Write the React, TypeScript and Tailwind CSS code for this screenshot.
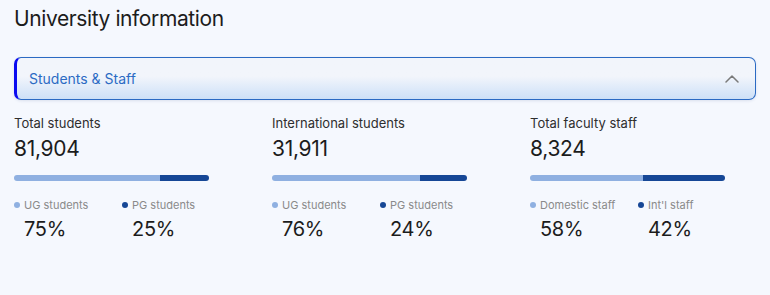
import React from 'react';

type Stat = {
  label: string;
  value: string;
  parts: { name: string; pct: number }[];
};

const stats: Stat[] = [
  {
    label: 'Total students',
    value: '81,904',
    parts: [
      { name: 'UG students', pct: 75 },
      { name: 'PG students', pct: 25 },
    ],
  },
  {
    label: 'International students',
    value: '31,911',
    parts: [
      { name: 'UG students', pct: 76 },
      { name: 'PG students', pct: 24 },
    ],
  },
  {
    label: 'Total faculty staff',
    value: '8,324',
    parts: [
      { name: 'Domestic staff', pct: 58 },
      { name: "Int'l staff", pct: 42 },
    ],
  },
];

const StatBlock = ({ stat }: { stat: Stat }) => {
  const [a, b] = stat.parts;
  return (
    <div className="w-[258px] shrink-0">
      <div className="text-[13px] leading-[16px] text-[#2e2e2e]">{stat.label}</div>
      <div className="mt-[5px] text-[21px] leading-[26px] text-[#1c1c1c] tracking-[-0.3px]">{stat.value}</div>
      <div className="mt-[13px] flex h-[6px] w-[195px] overflow-hidden rounded-full">
        <div className="h-full bg-[#8fb0e1]" style={{ width: `${a.pct}%` }} />
        <div className="h-full flex-1 bg-[#164796]" />
      </div>
      <div className="mt-[17px] flex">
        {[a, b].map((p, i) => (
          <div key={p.name} className="w-[108px]">
            <div className="flex items-center gap-[4px]">
              <span className={`h-[6px] w-[6px] rounded-full ${i === 0 ? 'bg-[#8fb0e1]' : 'bg-[#164796]'}`} />
              <span className="text-[11px] leading-[14px] text-[#8a8a8a]">{p.name}</span>
            </div>
            <div className="mt-[5px] pl-[10px] text-[20px] leading-[24px] text-[#1c1c1c] tracking-[-0.3px]">{p.pct}%</div>
          </div>
        ))}
      </div>
    </div>
  );
};

export default function App() {
  return (
    <div
      className="h-[295px] w-[770px] overflow-hidden bg-[#f5f8fe] px-[14px] pt-[6px]"
      style={{ fontFamily: 'Inter, "Noto Sans", sans-serif' }}
    >
      <h1 className="text-[21px] leading-[26px] text-[#1c1c1c] tracking-[-0.4px]">University information</h1>
      <div className="mt-[25px] flex h-[43px] items-center justify-between rounded-[7px] border border-l-[3px] border-[#2b6ac3] border-l-[#0a0af0] bg-gradient-to-b from-[#f2f5fb] from-45% to-[#cde0f7] pl-[12px] pr-[16px] shadow-[0_1px_3px_rgba(30,60,120,0.12)]">
        <span className="text-[14px] text-[#2c6bc4]">Students &amp; Staff</span>
        <svg width="14" height="8" viewBox="0 0 14 8" fill="none">
          <path d="M1 7l6-6 6 6" stroke="#7a7a7a" strokeWidth="1.5" strokeLinecap="round" strokeLinejoin="round" />
        </svg>
      </div>
      <div className="mt-[15px] flex">
        {stats.map((s) => (
          <StatBlock key={s.label} stat={s} />
        ))}
      </div>
    </div>
  );
}
